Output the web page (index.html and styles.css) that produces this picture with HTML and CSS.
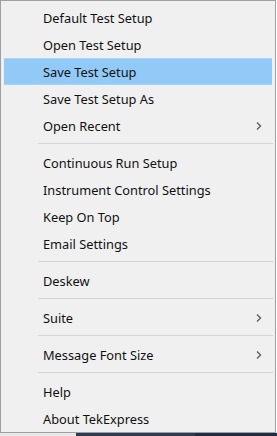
FILE: index.html
```html
<!DOCTYPE html>
<html lang="en">
<head>
    <meta charset="UTF-8">
    <title>TekExpress Menu</title>
    <link rel="stylesheet" href="styles.css">
</head>
<body>
    <div class="menu">
        <div class="item">Default Test Setup</div>
        <div class="item">Open Test Setup</div>
        <div class="item active">Save Test Setup</div>
        <div class="item">Save Test Setup As</div>
        <div class="item">Open Recent
            <svg class="arrow" width="6" height="8" viewBox="0 0 6 8"><path d="M1 0.5 L4.5 4 L1 7.5" fill="none" stroke="#5f5f5f" stroke-width="1.4"/></svg>
        </div>
        <div class="sep"></div>
        <div class="item">Continuous Run Setup</div>
        <div class="item">Instrument Control Settings</div>
        <div class="item">Keep On Top</div>
        <div class="item">Email Settings</div>
        <div class="sep"></div>
        <div class="item">Deskew</div>
        <div class="sep"></div>
        <div class="item">Suite
            <svg class="arrow" width="6" height="8" viewBox="0 0 6 8"><path d="M1 0.5 L4.5 4 L1 7.5" fill="none" stroke="#5f5f5f" stroke-width="1.4"/></svg>
        </div>
        <div class="sep"></div>
        <div class="item">Message Font Size
            <svg class="arrow" width="6" height="8" viewBox="0 0 6 8"><path d="M1 0.5 L4.5 4 L1 7.5" fill="none" stroke="#5f5f5f" stroke-width="1.4"/></svg>
        </div>
        <div class="sep"></div>
        <div class="item">Help</div>
        <div class="item">About TekExpress</div>
    </div>
    <div class="behind">
        <div class="behind-light"></div>
        <div class="behind-dark"></div>
        <div class="behind-navy"></div>
    </div>
</body>
</html>
```

FILE: styles.css
```css
body {
    margin: 0;
    padding: 0;
    background: #fff;
    font-family: "Noto Sans", "Open Sans", sans-serif;
    font-size: 12.8px;
    color: #111;
}
.menu {
    width: 274px;
    background: #f0f0f0;
    border: 1px solid #a0a0a0;
    padding: 3px 0 0;
}
.item {
    height: 27px;
    margin: 0 3px;
    padding-left: 39px;
    padding-right: 10px;
    display: flex;
    justify-content: space-between;
    align-items: center;
}
.item.active {
    background: #91c9f7;
    box-shadow: inset 0 1px 0 #a6d3f8, inset 0 -1px 0 #a6d3f8;
}
.arrow {
    display: block;
}
.sep {
    height: 1px;
    background: #d5d5d5;
    margin: 4px 2px 5px 37px;
}
.behind {
    display: flex;
    height: 3px;
}
.behind-light {
    width: 76px;
    background: #e8e8e8;
}
.behind-dark {
    width: 119px;
    background: #2c3b52;
}
.behind-navy {
    flex: 1;
    background: #1f2d44;
}
```
